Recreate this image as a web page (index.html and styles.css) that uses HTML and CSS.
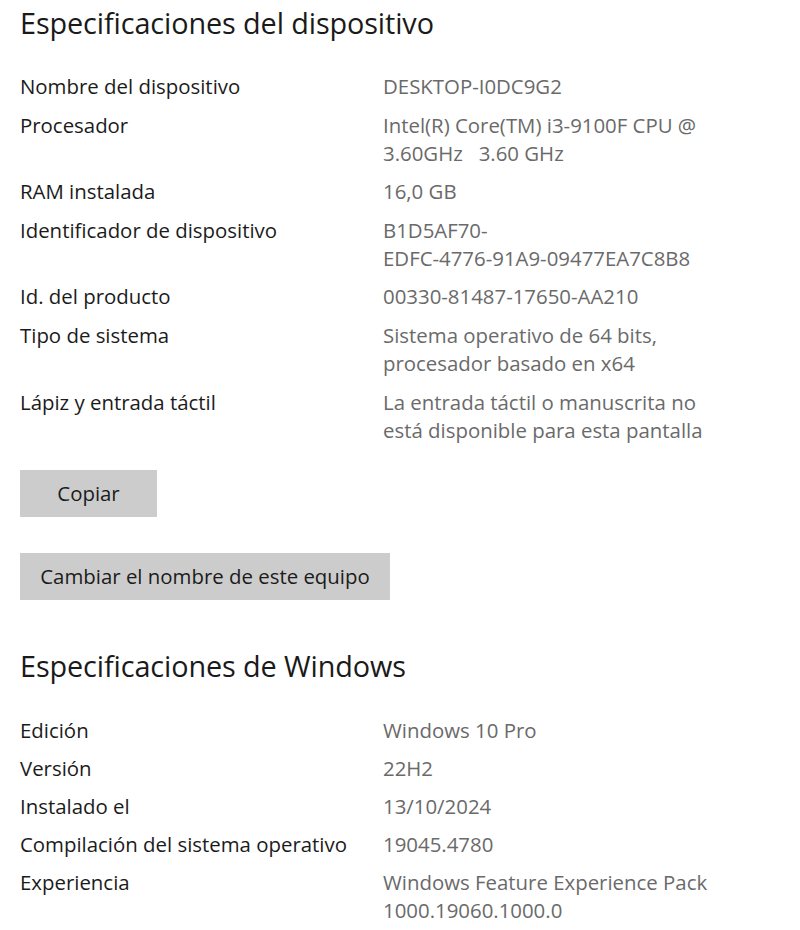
FILE: index.html
```html
<!DOCTYPE html>
<html lang="es">
<head>
<meta charset="utf-8">
<title>Especificaciones</title>
<link rel="stylesheet" href="styles.css">
</head>
<body>
<main class="page">
  <section class="section">
    <h1 class="heading">Especificaciones del dispositivo</h1>
    <dl class="specs">
      <div class="row"><dt>Nombre del dispositivo</dt><dd>DESKTOP-I0DC9G2</dd></div>
      <div class="row"><dt>Procesador</dt><dd>Intel(R) Core(TM) i3-9100F CPU @<br>3.60GHz&nbsp;&nbsp;&nbsp;3.60 GHz</dd></div>
      <div class="row"><dt>RAM instalada</dt><dd>16,0 GB</dd></div>
      <div class="row"><dt>Identificador de dispositivo</dt><dd>B1D5AF70-<br>EDFC-4776-91A9-09477EA7C8B8</dd></div>
      <div class="row"><dt>Id. del producto</dt><dd>00330-81487-17650-AA210</dd></div>
      <div class="row"><dt>Tipo de sistema</dt><dd>Sistema operativo de 64 bits,<br>procesador basado en x64</dd></div>
      <div class="row"><dt>Lápiz y entrada táctil</dt><dd>La entrada táctil o manuscrita no<br>está disponible para esta pantalla</dd></div>
    </dl>
    <div class="actions">
      <button class="btn btn-copy" type="button">Copiar</button>
      <button class="btn btn-rename" type="button">Cambiar el nombre de este equipo</button>
    </div>
  </section>
  <section class="section section-win">
    <h1 class="heading">Especificaciones de Windows</h1>
    <dl class="specs specs-win">
      <div class="row"><dt>Edición</dt><dd>Windows 10 Pro</dd></div>
      <div class="row"><dt>Versión</dt><dd>22H2</dd></div>
      <div class="row"><dt>Instalado el</dt><dd>13/10/2024</dd></div>
      <div class="row"><dt>Compilación del sistema operativo</dt><dd>19045.4780</dd></div>
      <div class="row"><dt>Experiencia</dt><dd>Windows Feature Experience Pack<br>1000.19060.1000.0</dd></div>
    </dl>
  </section>
</main>
</body>
</html>
```
FILE: styles.css
```css
* { box-sizing: border-box; }
html, body { margin: 0; padding: 0; background: #ffffff; }
body {
  font-family: "Open Sans", "Noto Sans", "Liberation Sans", sans-serif;
  color: #1b1b1b;
}
.page {
  padding: 0 20px;
}
.heading {
  margin: 0;
  font-size: 28.8px;
  font-weight: 400;
  line-height: 40px;
  padding-top: 3px;
  color: #1a1a1a;
  letter-spacing: -0.1px;
}
.specs {
  margin: 29px 0 0;
  display: flex;
  flex-direction: column;
  gap: 10.6px;
}
.row {
  display: grid;
  grid-template-columns: 363px 1fr;
  font-size: 20.4px;
  line-height: 28px;
}
.row dt { color: #1b1b1b; }
.row dd { margin: 0; color: #6a6a6a; }
.actions {
  margin-top: 26px;
  display: flex;
  flex-direction: column;
  align-items: flex-start;
  gap: 36px;
}
.btn {
  border: none;
  background: #cccccc;
  font-family: inherit;
  font-size: 20.4px;
  color: #1b1b1b;
  height: 47px;
  padding: 0 10px;
}
.btn-copy { width: 137px; }
.btn-rename { width: 370px; }
.section-win { margin-top: 43px; }
.specs-win { margin-top: 30px; gap: 10.2px; }
```
